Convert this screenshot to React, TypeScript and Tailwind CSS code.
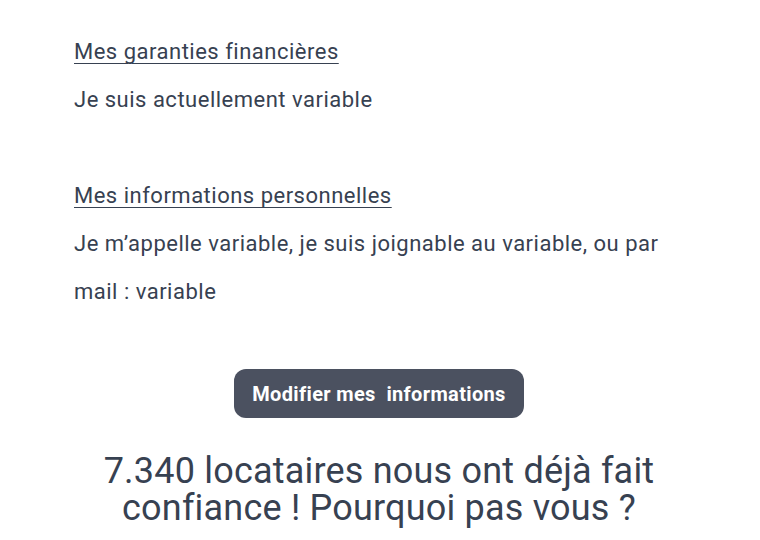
import React from "react";

export default function App() {
  return (
    <div className="min-h-[540px] bg-white" style={{ fontFamily: "Roboto, 'Noto Sans', sans-serif" }}>
      <div className="mx-[74px] pt-[28px] text-[22px] leading-[48px] tracking-[0.5px] text-[#374151]">
        <p className="underline decoration-1 underline-offset-[4px]">Mes garanties financières</p>
        <p>Je suis actuellement variable</p>
        <p className="h-[48px]"></p>
        <p className="underline decoration-1 underline-offset-[4px]">Mes informations personnelles</p>
        <p>Je m’appelle variable, je suis joignable au variable, ou par mail : variable</p>
      </div>
      <div className="mt-[53px] flex justify-center pr-[2px]">
        <button className="h-[49px] w-[290px] rounded-[12px] bg-[#4b5160] text-[20px] font-bold tracking-[0.35px] text-white whitespace-pre">
          Modifier mes  informations
        </button>
      </div>
      <p className="mx-auto mt-[35px] w-[640px] text-center text-[36px] leading-[37px] tracking-[0.2px] text-[#374151] pr-[2px]">
        7.340 locataires nous ont déjà fait confiance ! Pourquoi pas vous ?
      </p>
    </div>
  );
}
